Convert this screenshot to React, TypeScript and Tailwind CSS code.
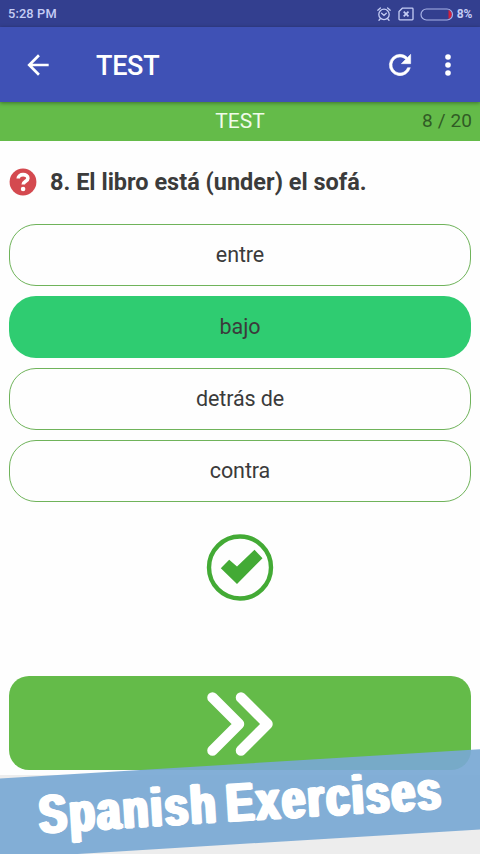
const options = ["entre", "bajo", "detrás de", "contra"];
const answer = "bajo";

function StatusBar() {
  return (
    <div className="flex h-[27px] items-center justify-between bg-[#333f8f] pl-[8px] pr-[8px] pt-[1px] text-[12.8px] font-medium text-[#c5cdf5]">
      <span className="tracking-[0.15px]">5:28 PM</span>
      <div className="flex items-center">
        <svg className="mr-[7px] h-[14px] w-[14px]" viewBox="0 0 14 14" fill="none" stroke="currentColor" strokeWidth="1.3" strokeLinecap="round">
          <circle cx="7" cy="7.4" r="5.2" />
          <path d="M.8 3.2 3.4 1M13.2 3.2 10.6 1M3.3 11.8 2 13.2M10.7 11.8 12 13.2M4.6 6.3 7 8.4 9.3 6.3" />
        </svg>
        <svg className="mr-[6px] h-[14px] w-[16px]" viewBox="0 0 16 14" fill="none" stroke="currentColor" strokeWidth="1.3">
          <path d="M4.3 1.2H14.2Q15 1.2 15 2V12Q15 12.8 14.2 12.8H1.8Q1 12.8 1 12V4.5Z" />
          <path d="m5.7 4.7 4.8 4.6m0-4.6L5.7 9.3" strokeWidth="1.7" />
        </svg>
        <svg className="mr-[3px] h-[13px] w-[34px]" viewBox="0 0 34 13" fill="none">
          <path d="M28.5 2Q31.8 3 31.8 6.5T28.5 11Z" fill="#d3203c" />
          <rect x="1" y="1" width="31.5" height="11" rx="5.5" stroke="#a9b3e8" strokeWidth="1.2" />
        </svg>
        <span className="text-[12px] font-bold tracking-[-0.3px]">8%</span>
      </div>
    </div>
  );
}

function Toolbar() {
  return (
    <header className="relative z-10 flex h-[75px] items-center bg-[#3f51b5] pl-[22px] pr-[16px] text-white shadow-[0_1px_4px_rgba(0,0,0,0.4)]">
      <svg className="h-[32px] w-[32px]" viewBox="0 0 24 24" fill="currentColor">
        <path d="M20 11H7.83l5.59-5.59L12 4l-8 8 8 8 1.41-1.41L7.83 13H20v-2z" />
      </svg>
      <h1 className="ml-[42px] flex-1 pt-[2px] text-[27px] font-medium leading-8 tracking-[-0.3px]">TEST</h1>
      <svg className="mr-[16px] h-[32px] w-[32px]" viewBox="0 0 24 24" fill="currentColor" stroke="currentColor" strokeWidth="0.4">
        <path d="M17.65 6.35A7.96 7.96 0 0 0 12 4a8 8 0 1 0 7.73 10h-2.08A6 6 0 1 1 12 6c1.66 0 3.14.69 4.22 1.78L13 11h7V4l-2.35 2.35z" />
      </svg>
      <svg className="h-[32px] w-[32px]" viewBox="0 0 24 24" fill="currentColor">
        <circle cx="12" cy="6" r="2.1" />
        <circle cx="12" cy="12" r="2.1" />
        <circle cx="12" cy="18" r="2.1" />
      </svg>
    </header>
  );
}

export default function App() {
  return (
    <div className="relative flex h-[854px] w-[480px] flex-col overflow-hidden bg-[#fefefe] font-[Roboto,sans-serif] text-[#3b3b3b]">
      <StatusBar />
      <Toolbar />
      <div className="grid h-[39px] grid-cols-3 items-center bg-[#64bb49] px-[8px]">
        <span className="col-start-2 text-center text-[21px] text-[#f0fbe9]">TEST</span>
        <span className="text-right text-[19px] tracking-[0.1px] text-[#315b25]">8 / 20</span>
      </div>

      <main className="flex h-[634px] flex-col px-[9px]">
        <div className="flex h-[83px] items-center">
          <svg className="mb-[2px] h-[28px] w-[28px]" viewBox="0 0 28 28">
            <circle cx="14" cy="14" r="13.4" fill="#d4494f" />
            <path d="M9.2 10.6C9.2 5.4 18.9 5.3 18.9 10.3C18.9 13.4 14.2 13.2 14.2 16.6" fill="none" stroke="#fff" strokeWidth="3.6" />
            <circle cx="14.1" cy="21" r="2.3" fill="#fff" />
          </svg>
          <h2 className="ml-[13px] whitespace-nowrap pt-px text-[23.5px] font-bold">8. El libro está (under) el sofá.</h2>
        </div>
        <div className="flex flex-col gap-[10px]">
          {options.map((option) => (
            <button
              key={option}
              className={
                option === answer
                  ? "h-[62px] rounded-[27px] bg-[#2fcc71] pt-px text-[21.5px] tracking-[-0.1px]"
                  : "h-[62px] rounded-[27px] border-[1.5px] border-[#6fb35a] pt-px text-[21.5px] tracking-[-0.1px]"
              }
            >
              {option}
            </button>
          ))}
        </div>
        <svg className="mx-auto mt-[31px] h-[68px] w-[68px]" viewBox="0 0 68 68">
          <circle cx="34" cy="34.5" r="31" fill="none" stroke="#43aa35" strokeWidth="4.4" />
          <path d="M14.8 35.2 23.2 26.7 31 33.5 48.5 16.7 56.5 25.3 31 51Z" fill="#43aa35" />
        </svg>
        <button className="mt-[75px] flex h-[94px] items-center justify-center rounded-[20px] bg-[#64bb49] pt-[2px]">
          <svg className="h-[66px] w-[68px]" viewBox="0 0 68 66" fill="none" stroke="#fff" strokeWidth="10.5" strokeLinecap="round" strokeLinejoin="round">
            <path d="M6.5 6.5 33 33 6.5 59.5M35 6.5 61.5 33 35 59.5" />
          </svg>
        </button>
      </main>
      <footer className="flex-1 bg-[#ededed]" />

      <div className="absolute -left-[20px] top-[764px] z-20 flex h-[80px] w-[520px] -rotate-[3.5deg] items-center justify-center bg-[#78a8d4]/92">
        <span className="mb-[4px] origin-center scale-x-[0.765] whitespace-nowrap pl-[3px] font-['Liberation_Sans',Arial,sans-serif] text-[54px] font-bold leading-none tracking-[3.5px] [word-spacing:-8px] text-white [-webkit-text-stroke:1.5px_white] [text-shadow:1.5px_0_#fff,-1.5px_0_#fff,2.8px_0_#fff,-2.8px_0_#fff]">
          Spanish Exercises
        </span>
      </div>
    </div>
  );
}
